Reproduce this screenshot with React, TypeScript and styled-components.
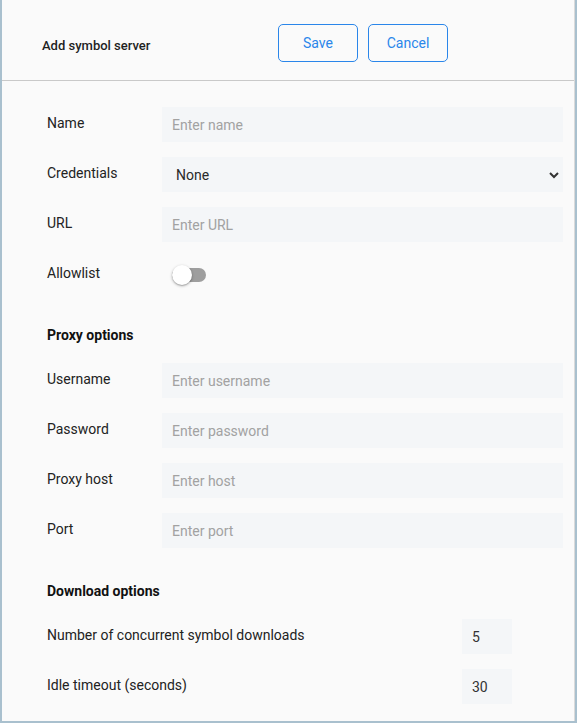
import React from "react";
import styled, { createGlobalStyle } from "styled-components";

const Global = createGlobalStyle`
  html, body { margin: 0; padding: 0; background: #fafafa; }
  body { font-family: Roboto, "Noto Sans", Arial, sans-serif; }
  * { box-sizing: border-box; }
`;

const Frame = styled.div`
  width: 577px;
  height: 723px;
  border-left: 2px solid #a9c0ce;
  border-right: 2px solid #a9c0ce;
  border-bottom: 2px solid #a9c0ce;
  background: #fafafa;
  overflow: hidden;
`;

const Inner = styled.div`
  height: 100%;
  border-right: 1px solid #dadada;
  display: flex;
  flex-direction: column;
`;

const Header = styled.header`
  height: 81px;
  flex-shrink: 0;
  display: flex;
  align-items: flex-start;
  padding: 24px 0 0 40px;
  border-bottom: 1px solid #c9c9c9;
`;

const Title = styled.h1`
  margin: 14px 0 0;
  width: 236px;
  font-size: 13px;
  line-height: 16px;
  font-weight: 500;
  color: #1f1f1f;
`;

const ButtonGroup = styled.div`
  display: flex;
  gap: 10px;
`;

const OutlineButton = styled.button`
  width: 80px;
  height: 38px;
  border: 1px solid #2a86ea;
  border-radius: 5px;
  background: #fafafa;
  color: #2a86ea;
  font-family: Roboto, Arial, sans-serif;
  font-size: 14px;
  padding: 0;
  cursor: pointer;
`;

const Form = styled.div`
  padding: 26px 11px 0 45px;
  display: flex;
  flex-direction: column;
`;

const Row = styled.div`
  display: flex;
  align-items: flex-start;
  margin-bottom: 15px;
`;

const Label = styled.label<{ $width?: number }>`
  width: ${(p) => p.$width ?? 115}px;
  flex-shrink: 0;
  padding-top: 6px;
  font-size: 14px;
  line-height: 20px;
  color: #222;
`;

const TextInput = styled.input`
  flex: 1;
  min-width: 0;
  height: 35px;
  border: none;
  outline: none;
  background: #f4f6f8;
  padding: 0 10px;
  font-family: Roboto, Arial, sans-serif;
  font-size: 14px;
  color: #333;
  &::placeholder { color: #a2a2a2; }
`;

const NumberInput = styled(TextInput)`
  flex: 0 0 50px;
  width: 50px;
`;

const SelectWrap = styled.div`
  flex: 1;
  position: relative;
  height: 35px;
`;

const Select = styled.select`
  appearance: none;
  -webkit-appearance: none;
  width: 100%;
  height: 35px;
  border: none;
  outline: none;
  background: #f4f6f8;
  padding: 1px 14px 0;
  font-family: Roboto, Arial, sans-serif;
  font-size: 14px;
  color: #2a2a2a;
`;

const Chevron = styled.svg`
  position: absolute;
  right: 3px;
  top: 14px;
  pointer-events: none;
`;

const ToggleRow = styled.div`
  height: 35px;
  display: flex;
  align-items: center;
  padding-left: 10px;
`;

const Track = styled.div`
  position: relative;
  width: 34px;
  height: 14px;
  border-radius: 7px;
  background: #9e9e9e;
`;

const Thumb = styled.div`
  position: absolute;
  left: 0;
  top: -3px;
  width: 20px;
  height: 20px;
  border-radius: 50%;
  background: #ffffff;
  box-shadow: 0 1px 3px rgba(0, 0, 0, 0.3), 0 1px 1px rgba(0, 0, 0, 0.14);
`;

const SectionTitle = styled.h2`
  margin: 18px 0 18px;
  font-size: 14px;
  line-height: 20px;
  font-weight: 700;
  color: #111;
`;

const FieldRow: React.FC<{ label: string; placeholder: string }> = ({ label, placeholder }) => (
  <Row>
    <Label>{label}</Label>
    <TextInput placeholder={placeholder} />
  </Row>
);

export default function App() {
  return (
    <>
      <Global />
      <Frame>
        <Inner>
          <Header>
            <Title>Add symbol server</Title>
            <ButtonGroup>
              <OutlineButton>Save</OutlineButton>
              <OutlineButton>Cancel</OutlineButton>
            </ButtonGroup>
          </Header>
          <Form>
            <FieldRow label="Name" placeholder="Enter name" />
            <Row>
              <Label>Credentials</Label>
              <SelectWrap>
                <Select defaultValue="none">
                  <option value="none">None</option>
                </Select>
                <Chevron width="12" height="8" viewBox="0 0 12 8">
                  <path d="M2 2 L6 6 L10 2" fill="none" stroke="#333" strokeWidth="2" />
                </Chevron>
              </SelectWrap>
            </Row>
            <FieldRow label="URL" placeholder="Enter URL" />
            <Row>
              <Label>Allowlist</Label>
              <ToggleRow>
                <Track>
                  <Thumb />
                </Track>
              </ToggleRow>
            </Row>
            <SectionTitle>Proxy options</SectionTitle>
            <FieldRow label="Username" placeholder="Enter username" />
            <FieldRow label="Password" placeholder="Enter password" />
            <FieldRow label="Proxy host" placeholder="Enter host" />
            <FieldRow label="Port" placeholder="Enter port" />
            <SectionTitle>Download options</SectionTitle>
            <Row>
              <Label $width={415}>Number of concurrent symbol downloads</Label>
              <NumberInput defaultValue="5" />
            </Row>
            <Row>
              <Label $width={415}>Idle timeout (seconds)</Label>
              <NumberInput defaultValue="30" />
            </Row>
          </Form>
        </Inner>
      </Frame>
    </>
  );
}
